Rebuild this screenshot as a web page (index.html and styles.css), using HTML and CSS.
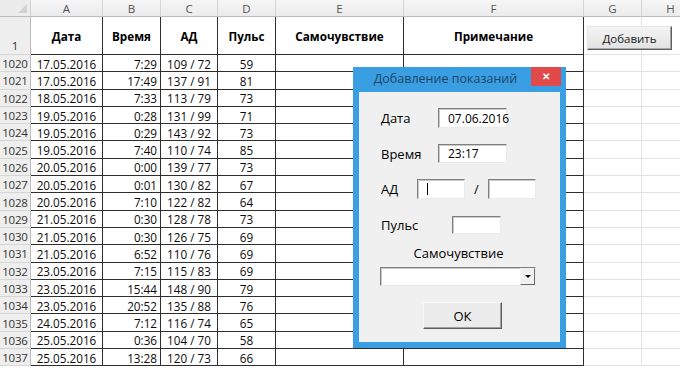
FILE: index.html
```html
<!DOCTYPE html>
<html lang="ru">
<head>
<meta charset="utf-8">
<title>Показания</title>
<link rel="stylesheet" href="styles.css">
</head>
<body>
<div class="sheet">
  <div class="corner"></div><div class="colh">A</div><div class="colh">B</div><div class="colh">C</div><div class="colh">D</div><div class="colh">E</div><div class="colh">F</div><div class="colh">G</div><div class="colh">H</div>

  <div class="rh rh1">1</div><div class="c hd">Дата</div><div class="c hd">Время</div><div class="c hd">АД</div><div class="c hd">Пульс</div><div class="c hd">Самочувствие</div><div class="c hd">Примечание</div><div class="g"></div><div class="g"></div>

  <div class="rh">1020</div><div class="c m">17.05.2016</div><div class="c r">7:29</div><div class="c m">109 / 72</div><div class="c m">59</div><div class="c"></div><div class="c"></div><div class="g"></div><div class="g"></div>
  <div class="rh">1021</div><div class="c m">17.05.2016</div><div class="c r">17:49</div><div class="c m">137 / 91</div><div class="c m">81</div><div class="c"></div><div class="c"></div><div class="g"></div><div class="g"></div>
  <div class="rh">1022</div><div class="c m">18.05.2016</div><div class="c r">7:33</div><div class="c m">113 / 79</div><div class="c m">73</div><div class="c"></div><div class="c"></div><div class="g"></div><div class="g"></div>
  <div class="rh">1023</div><div class="c m">19.05.2016</div><div class="c r">0:28</div><div class="c m">131 / 99</div><div class="c m">71</div><div class="c"></div><div class="c"></div><div class="g"></div><div class="g"></div>
  <div class="rh">1024</div><div class="c m">19.05.2016</div><div class="c r">0:29</div><div class="c m">143 / 92</div><div class="c m">73</div><div class="c"></div><div class="c"></div><div class="g"></div><div class="g"></div>
  <div class="rh">1025</div><div class="c m">19.05.2016</div><div class="c r">7:40</div><div class="c m">110 / 74</div><div class="c m">85</div><div class="c"></div><div class="c"></div><div class="g"></div><div class="g"></div>
  <div class="rh">1026</div><div class="c m">20.05.2016</div><div class="c r">0:00</div><div class="c m">139 / 77</div><div class="c m">73</div><div class="c"></div><div class="c"></div><div class="g"></div><div class="g"></div>
  <div class="rh">1027</div><div class="c m">20.05.2016</div><div class="c r">0:01</div><div class="c m">130 / 82</div><div class="c m">67</div><div class="c"></div><div class="c"></div><div class="g"></div><div class="g"></div>
  <div class="rh">1028</div><div class="c m">20.05.2016</div><div class="c r">7:10</div><div class="c m">122 / 82</div><div class="c m">64</div><div class="c"></div><div class="c"></div><div class="g"></div><div class="g"></div>
  <div class="rh">1029</div><div class="c m">21.05.2016</div><div class="c r">0:30</div><div class="c m">128 / 78</div><div class="c m">73</div><div class="c"></div><div class="c"></div><div class="g"></div><div class="g"></div>
  <div class="rh">1030</div><div class="c m">21.05.2016</div><div class="c r">0:30</div><div class="c m">126 / 75</div><div class="c m">69</div><div class="c"></div><div class="c"></div><div class="g"></div><div class="g"></div>
  <div class="rh">1031</div><div class="c m">21.05.2016</div><div class="c r">6:52</div><div class="c m">110 / 76</div><div class="c m">69</div><div class="c"></div><div class="c"></div><div class="g"></div><div class="g"></div>
  <div class="rh">1032</div><div class="c m">23.05.2016</div><div class="c r">7:15</div><div class="c m">115 / 83</div><div class="c m">69</div><div class="c"></div><div class="c"></div><div class="g"></div><div class="g"></div>
  <div class="rh">1033</div><div class="c m">23.05.2016</div><div class="c r">15:44</div><div class="c m">148 / 90</div><div class="c m">79</div><div class="c"></div><div class="c"></div><div class="g"></div><div class="g"></div>
  <div class="rh">1034</div><div class="c m">23.05.2016</div><div class="c r">20:52</div><div class="c m">135 / 88</div><div class="c m">76</div><div class="c"></div><div class="c"></div><div class="g"></div><div class="g"></div>
  <div class="rh">1035</div><div class="c m">24.05.2016</div><div class="c r">7:12</div><div class="c m">116 / 74</div><div class="c m">65</div><div class="c"></div><div class="c"></div><div class="g"></div><div class="g"></div>
  <div class="rh">1036</div><div class="c m">25.05.2016</div><div class="c r">0:36</div><div class="c m">104 / 70</div><div class="c m">58</div><div class="c"></div><div class="c"></div><div class="g"></div><div class="g"></div>
  <div class="rh">1037</div><div class="c m">25.05.2016</div><div class="c r">13:28</div><div class="c m">120 / 73</div><div class="c m">66</div><div class="c"></div><div class="c"></div><div class="g"></div><div class="g"></div>
</div>

<button class="addbtn" type="button">Добавить</button>

<div class="dialog">
  <div class="titlebar">
    <span class="title">Добавление показаний</span>
    <span class="close">✕</span>
  </div>
  <div class="dbody">
    <div class="frow f-date"><span class="lbl l-wide">Дата</span><span class="tb tb-long">07.06.2016</span></div>
    <div class="frow f-time"><span class="lbl l-wide">Время</span><span class="tb tb-long">23:17</span></div>
    <div class="frow f-ad"><span class="lbl l-ad">АД</span><span class="tb tb-short"><span class="caret"></span></span><span class="slash">/</span><span class="tb tb-short"></span></div>
    <div class="frow f-pulse"><span class="lbl l-pulse">Пульс</span><span class="tb tb-pulse"></span></div>
    <div class="clabel">Самочувствие</div>
    <div class="combo"><span class="combo-text"></span><span class="combo-btn"><span class="tri"></span></span></div>
    <button class="okbtn" type="button">ОК</button>
  </div>
</div>
</body>
</html>
```

FILE: styles.css
```css
html, body {
  margin: 0;
  padding: 0;
}
body {
  width: 680px;
  height: 369px;
  overflow: hidden;
  background: #ffffff;
  position: relative;
  font-family: "Open Sans", "Noto Sans", sans-serif;
}

.sheet {
  display: grid;
  grid-template-columns: 31px 72px 58px 57px 58px 128px 180px 58px 58px;
  grid-template-rows: 17px 38px repeat(18, 17.3px);
  font-size: 11.7px;
  color: #0a0a0a;
}
.sheet > div {
  box-sizing: border-box;
  display: flex;
  align-items: center;
  white-space: nowrap;
  overflow: hidden;
  padding-top: 1px;
}

.corner {
  background: #ececec;
  border-right: 1px solid #d0d0d0;
  border-bottom: 1px solid #bcbcbc;
  position: relative;
}
.corner::after {
  content: "";
  position: absolute;
  right: 3px;
  bottom: 3px;
  width: 0;
  height: 0;
  border-left: 9px solid transparent;
  border-bottom: 9px solid #d2d2d2;
}
.colh {
  background: linear-gradient(#f6f6f6, #ebebeb);
  border-right: 1px solid #d6d6d6;
  border-bottom: 1px solid #bcbcbc;
  justify-content: center;
  color: #555;
  font-size: 11.5px;
}
.rh {
  background: #eeeeee;
  border-right: 1px solid #bdbdbd;
  border-bottom: 1px solid #d6d6d6;
  justify-content: center;
  color: #333;
  font-size: 11.5px;
  letter-spacing: -0.2px;
}
.sheet > .rh1 {
  align-items: flex-end;
  padding-bottom: 1px;
}
.c {
  border-right: 1px solid #2e2e2e;
  border-bottom: 1px solid #2e2e2e;
  padding: 0 3px;
}
.m { justify-content: center; }
.r { justify-content: flex-end; }
.hd {
  justify-content: center;
  font-weight: 700;
  font-size: 11.7px;
  color: #000;
}
.g {
  border-right: 1px solid #e2e2e2;
  border-bottom: 1px solid #e2e2e2;
}

.addbtn {
  position: absolute;
  left: 587px;
  top: 26px;
  width: 85px;
  height: 24px;
  box-sizing: border-box;
  margin: 0;
  padding: 0;
  font-family: "Open Sans", "Noto Sans", sans-serif;
  font-size: 11.5px;
  color: #1a1a1a;
  background: linear-gradient(#f4f4f4, #e2e2e2);
  border: 1px solid;
  border-color: #e6e6e6 #5e5e5e #5e5e5e #e6e6e6;
  box-shadow: inset -1px -1px 0 #a8a8a8;
}

.dialog {
  position: absolute;
  left: 353px;
  top: 67px;
  width: 213px;
  height: 281px;
  box-sizing: border-box;
  background: #3a9ee2;
  padding: 0 6px 6px 6px;
  display: flex;
  flex-direction: column;
}
.titlebar {
  height: 25px;
  display: flex;
  align-items: flex-start;
}
.title {
  flex: 1;
  text-align: center;
  padding-left: 1px;
  padding-top: 4px;
  font-size: 12.5px;
  line-height: 16px;
  color: #1d4566;
  white-space: nowrap;
}
.close {
  width: 30px;
  height: 19px;
  background: #e24a4a;
  color: #fff;
  font-size: 10px;
  font-weight: 700;
  line-height: 19px;
  text-align: center;
  margin-right: -1px;
}
.dbody {
  flex: 1;
  background: #f0f0f0;
  display: flex;
  flex-direction: column;
  align-items: flex-start;
  padding-top: 16px;
}
.frow {
  display: flex;
  align-items: center;
  height: 20px;
  margin-left: 22px;
}
.f-time { margin-top: 16px; height: 19px; }
.f-ad { margin-top: 16px; }
.f-pulse { margin-top: 17px; height: 18px; }
.lbl {
  font-size: 13px;
  color: #000;
}
.l-wide { width: 57px; }
.l-ad { width: 36px; }
.l-pulse { width: 71px; }
.tb {
  box-sizing: border-box;
  height: 100%;
  background: #fff;
  border: 1px solid;
  border-color: #7f7f7f #eaeaea #eaeaea #7f7f7f;
  box-shadow: inset 1px 1px 0 #c9c9c9;
  font-size: 12px;
  color: #000;
  padding-left: 9px;
  display: flex;
  align-items: center;
  white-space: nowrap;
}
.tb-long { width: 69px; }
.tb-short { width: 48px; }
.tb-pulse { width: 49px; }
.caret {
  width: 1px;
  height: 12px;
  background: #000;
}
.slash {
  width: 23px;
  text-align: center;
  font-size: 13px;
  color: #000;
}
.clabel {
  align-self: stretch;
  text-align: center;
  margin-top: 11px;
  font-size: 13px;
  line-height: 16px;
  color: #000;
  padding-right: 2px;
}
.combo {
  margin-top: 6px;
  margin-left: 21px;
  width: 156px;
  height: 19px;
  box-sizing: border-box;
  background: #fff;
  border: 1px solid;
  border-color: #7f7f7f #eaeaea #eaeaea #7f7f7f;
  box-shadow: inset 1px 1px 0 #c9c9c9;
  display: flex;
}
.combo-text { flex: 1; }
.combo-btn {
  width: 15px;
  box-sizing: border-box;
  background: #f0f0f0;
  border: 1px solid;
  border-color: #f4f4f4 #6a6a6a #6a6a6a #f4f4f4;
  display: flex;
  align-items: center;
  justify-content: center;
}
.tri {
  width: 0;
  height: 0;
  border-left: 3px solid transparent;
  border-right: 3px solid transparent;
  border-top: 3px solid #000;
}
.okbtn {
  margin-top: 16px;
  margin-left: 64px;
  width: 79px;
  height: 27px;
  box-sizing: border-box;
  padding: 0;
  font-family: "Open Sans", "Noto Sans", sans-serif;
  font-size: 13px;
  color: #000;
  background: #ececec;
  border: 1px solid;
  border-color: #f8f8f8 #5e5e5e #5e5e5e #f8f8f8;
  box-shadow: inset -1px -1px 0 #a0a0a0;
}
```
